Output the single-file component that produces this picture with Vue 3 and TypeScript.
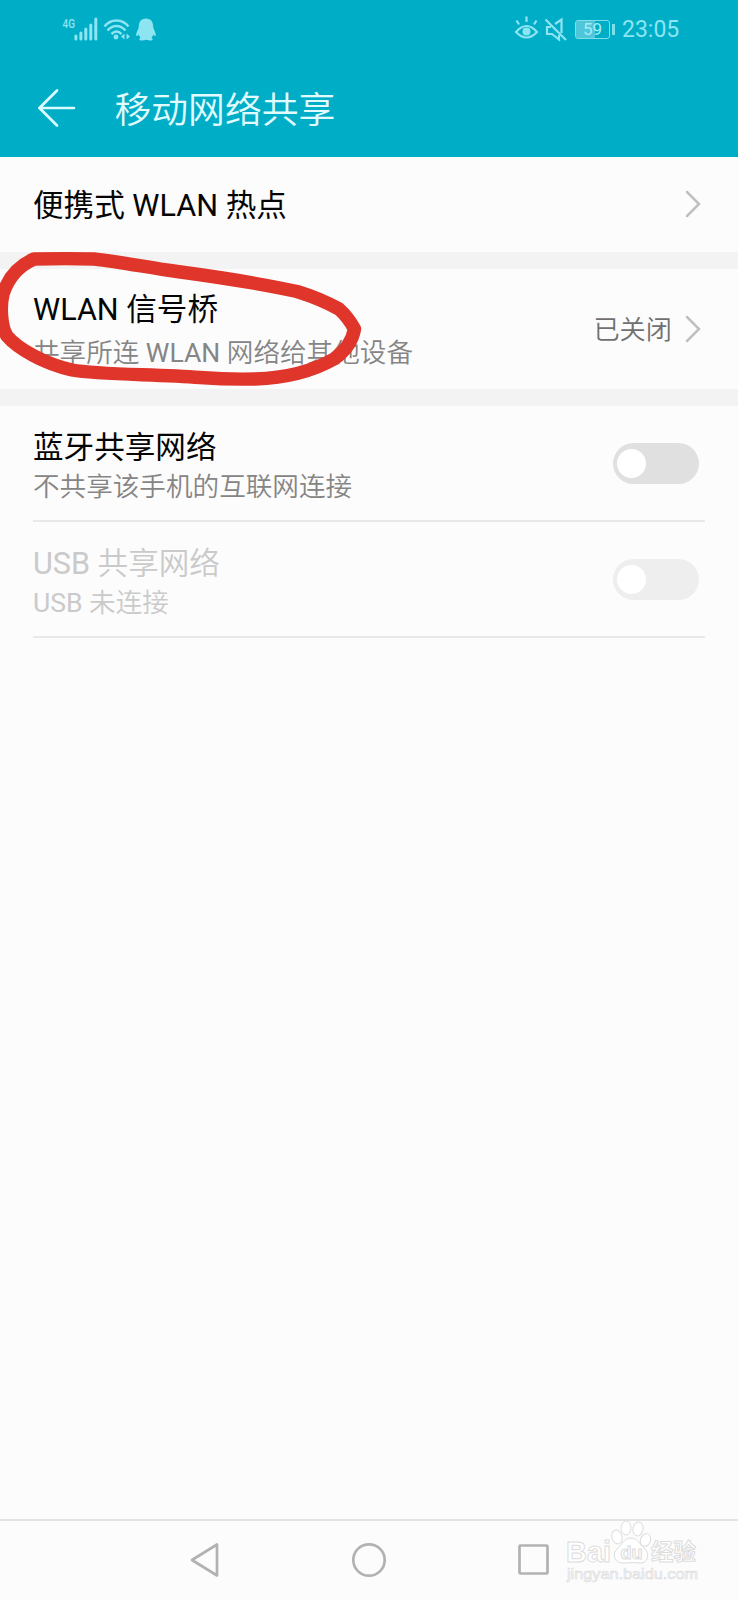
<script setup lang="ts">
interface SwitchRow {
  title: string
  latin: string
  summary: string
  disabled: boolean
}

const switchRows: SwitchRow[] = [
  { title: '蓝牙共享网络', latin: '', summary: '不共享该手机的互联网连接', disabled: false },
  { title: ' 共享网络', latin: 'USB', summary: ' 未连接', disabled: true },
]
</script>

<template>
  <div class="screen">
    <header class="header">
      <div class="status">
        <svg class="status-left" width="100" height="30" viewBox="0 0 100 30">
          <text class="net" x="0.500" y="12.500" textLength="12.500" lengthAdjust="spacingAndGlyphs">4G</text>
          <g class="bars">
            <path d="M13.9 24v-3M18.9 24v-6M23.8 24v-10M28.8 24v-14M33.8 24V4" />
          </g>
          <g class="arcs">
            <path d="M42.5 11.5C49 3.5 60 3.5 66.5 11.5M45.5 15.5C51 9.5 58 9.5 63.5 15.5M49.5 19C53 15.5 56 15.5 59.5 19" />
          </g>
          <circle class="solid" cx="54" cy="22" r="2.4" />
          <path class="solid" d="M62.5 18.500v6l-3.500-3zM64.5 18.500v6l3.500-3z" />
          <path class="solid" d="M84 3.500c-5 0-7.200 3.600-7.200 8 0 2.500-2.900 6-2.600 9 .3 1.200 1.300.5 2.400-1 .4 1.400 1.100 2.500 1.900 3.300-1 .7-1.500 1.600-.9 2.100 1.200.9 5.200.8 6.400-.3 1.200 1.100 5.200 1.200 6.400.3.6-.5.100-1.400-.9-2.100.8-.8 1.500-1.900 1.900-3.300 1.100 1.500 2.100 2.200 2.400 1 .3-3-2.600-6.500-2.600-9 0-4.400-2.200-8-7.200-8z" />
        </svg>
        <div class="status-right">
          <svg width="54" height="30" viewBox="0 0 54 30">
            <g class="thin">
              <path d="M2 17Q12.500 5 23 17Q12.500 28 2 17zM5 9.500l-2.500-4M20 9.500l2.500-4M12.500 7V1.500" />
              <path d="M37 12h-4v7h5l7 5.500V20M41 9l6.500-4.500V18M31.500 4.500l20.500 20.500" />
            </g>
            <circle class="solid" cx="12.500" cy="16.500" r="4" />
          </svg>
          <span class="battery"><span class="level">59</span></span>
          <span class="battery-tip"></span>
          <span class="clock">23:05</span>
        </div>
      </div>
      <div class="bar">
        <svg class="back" width="38" height="38" viewBox="0 0 38 38">
          <path d="M36 19H1.800M19 1.500L1.500 19L19 36.500" />
        </svg>
        <h1>移动网络共享</h1>
      </div>
    </header>

    <main class="list">
      <div class="row hotspot">
        <div class="title">便携式 WLAN 热点</div>
        <svg class="chevron" width="16" height="28" viewBox="0 0 16 28"><path d="M2 2l12 12L2 26" /></svg>
      </div>
      <div class="gap"></div>
      <div class="row bridge">
        <div class="texts">
          <div class="title">WLAN 信号桥</div>
          <div class="summary">共享所连 <span class="latin">WLAN</span> 网络给其他设备</div>
        </div>
        <div class="state">已关闭</div>
        <svg class="chevron" width="16" height="28" viewBox="0 0 16 28"><path d="M2 2l12 12L2 26" /></svg>
        <svg class="mark" width="370" height="140" viewBox="0 250 370 140">
          <path d="M34 259C55 258.500 76 258.500 94 259C122 262 150 268 177 271.500C218 277 258 283 297 291.500C315 297 328 303 339 309Q348 317 354.500 329C352 343 344 352 334 359C313 371 285 378 255 379C236 379.500 220 379 200 377.500C155 374 100 375 72 370C45 364 18 349 7 336C1 327 0 306 3 294C8 278 18 266 34 259Z" />
        </svg>
      </div>
      <div class="gap"></div>
      <div v-for="row in switchRows" :key="row.title" class="row toggle-row" :class="{ disabled: row.disabled }">
        <div class="texts">
          <div class="title"><span class="latin">{{ row.latin }}</span>{{ row.title }}</div>
          <div class="summary"><span class="latin">{{ row.latin }}</span>{{ row.summary }}</div>
        </div>
        <div class="switch"><div class="knob"></div></div>
      </div>
    </main>

    <footer class="nav">
      <svg width="30" height="36" viewBox="0 0 30 36"><path d="M27 2.500v31L2 18z" /></svg>
      <svg width="36" height="36" viewBox="0 0 36 36"><circle cx="18" cy="18" r="15.700" /></svg>
      <svg width="32" height="36" viewBox="0 0 32 36"><rect x="1.500" y="3.500" width="28" height="28" rx="1" /></svg>
      <svg class="watermark" width="140" height="70" viewBox="0 0 140 70">
        <text class="brand" x="0" y="40.500" textLength="45" lengthAdjust="spacingAndGlyphs">Bai</text>
        <g class="paw">
          <ellipse cx="51" cy="16" rx="5" ry="7" transform="rotate(-15 51 16)" />
          <ellipse cx="60" cy="7" rx="5" ry="7" />
          <ellipse cx="72" cy="8" rx="5" ry="7" transform="rotate(12 72 8)" />
          <ellipse cx="79.500" cy="19" rx="5" ry="6.500" transform="rotate(20 79.500 19)" />
          <path d="M65 17C58 17 56 24 51 28C46 32 48 42 57 42C62 42 68 41 73 42C82 43 84 33 79 28C73 23 72 17 65 17Z" />
        </g>
        <text class="du" x="54.500" y="38" textLength="22" lengthAdjust="spacingAndGlyphs">du</text>
        <text class="cn" x="85" y="39" textLength="45" lengthAdjust="spacingAndGlyphs">经验</text>
        <text class="site" x="1" y="58" textLength="131" lengthAdjust="spacingAndGlyphs">jingyan.baidu.com</text>
      </svg>
    </footer>
  </div>
</template>

<style>
body {
  margin: 0;
  background: #fcfcfc;
}
</style>

<style scoped>
.screen {
  width: 738px;
  height: 1600px;
  display: flex;
  flex-direction: column;
  overflow: hidden;
  background: #fcfcfc;
  font-family: Roboto, "Noto Sans CJK SC", sans-serif;
}
svg {
  display: block;
  flex: none;
}
.header {
  height: 157px;
  flex: none;
  background: #00adc7;
}
.status {
  height: 59px;
  padding: 0 58px 0 62px;
  display: flex;
  align-items: center;
  justify-content: space-between;
}
.status-right {
  display: flex;
  align-items: center;
}
.net {
  font: 500 13px Roboto, sans-serif;
  fill: #8ce5f1;
}
.bars path {
  stroke: #8ce5f1;
  stroke-width: 3;
  stroke-linecap: round;
  fill: none;
}
.arcs path {
  stroke: #8ce5f1;
  stroke-width: 2.500;
  fill: none;
}
.thin path {
  stroke: #8ce5f1;
  stroke-width: 2.200;
  fill: none;
}
.solid {
  fill: #8ce5f1;
}
.battery {
  box-sizing: border-box;
  width: 35px;
  height: 19px;
  margin-left: 7px;
  border: 1.500px solid #7edeea;
  border-radius: 3px;
  background: linear-gradient(90deg, #4fc6d9 58%, transparent 58%);
  text-align: center;
}
.level {
  display: block;
  font-size: 17px;
  line-height: 17px;
  color: #a5edf5;
}
.battery-tip {
  width: 3px;
  height: 11px;
  margin: 0 7px 0 2px;
  background: #7edeea;
}
.clock {
  width: 58px;
  font-size: 23px;
  line-height: 30px;
  color: #8ce5f1;
}
.bar {
  height: 98px;
  display: flex;
  align-items: center;
  padding-left: 38px;
}
.back path {
  fill: none;
  stroke: #d8fcff;
  stroke-width: 2.700;
  stroke-linecap: round;
}
h1 {
  margin: 6px 0 0 38.500px;
  font-size: 36.800px;
  line-height: 48px;
  font-weight: 350;
  color: #e0fcff;
}
.row {
  position: relative;
  box-sizing: border-box;
  padding: 0 37px 0 33px;
  display: flex;
  align-items: center;
  justify-content: space-between;
}
.hotspot {
  height: 95px;
}
.hotspot .title {
  margin-top: 2px;
}
.hotspot .chevron {
  margin-bottom: 2px;
}
.bridge {
  height: 120px;
}
.bridge .texts {
  padding-top: 1px;
}
.gap {
  height: 17px;
  background: #f3f3f3;
}
.title {
  font-size: 30.600px;
  line-height: 42px;
  color: #050505;
  white-space: nowrap;
}
.summary {
  font-size: 26.600px;
  line-height: 36px;
  color: #858585;
  font-weight: 350;
  white-space: nowrap;
}
.latin {
  font-weight: 400;
}
.bridge .summary {
  margin-top: 4px;
}
.texts {
  flex: 1;
}
.state {
  margin: 2px 13px 0 0;
  font-size: 26.200px;
  line-height: 36px;
  font-weight: 350;
  color: #707070;
}
.chevron path {
  fill: none;
  stroke: #c0c0c0;
  stroke-width: 2.500;
  stroke-linecap: round;
}
.mark {
  position: absolute;
  left: 0;
  top: -19px;
}
.mark path {
  fill: none;
  stroke: #df352b;
  stroke-width: 13.400;
  stroke-linejoin: round;
}
.toggle-row {
  height: 116px;
  margin: 0 33px;
  padding: 0 6px 0 0;
  border-bottom: 2px solid #e8e8e8;
}
.toggle-row .texts {
  padding-top: 5px;
}
.switch {
  box-sizing: border-box;
  width: 86px;
  height: 41px;
  padding: 6px 4px;
  border-radius: 21px;
  background: #e0e0e0;
}
.knob {
  width: 29px;
  height: 29px;
  border-radius: 50%;
  background: #fff;
}
.disabled .title,
.disabled .summary {
  color: #cacaca;
}
.disabled .title {
  font-weight: 350;
}
.disabled .switch {
  background: #eee;
}
.nav {
  position: relative;
  box-sizing: border-box;
  height: 81px;
  margin-top: auto;
  padding: 0 188px 2px 190px;
  border-top: 2px solid #e4e4e4;
  display: flex;
  align-items: center;
  justify-content: space-between;
}
.nav > svg:not(.watermark) {
  fill: none;
  stroke: #b2b2b2;
  stroke-width: 2.700;
  stroke-linejoin: round;
}
.watermark {
  position: absolute;
  left: 566px;
  top: 0;
  overflow: visible;
  fill: #fff;
  stroke: #dcdcdc;
  stroke-width: 1;
}
.brand {
  font: 700 30px "Liberation Sans", sans-serif;
}
.du {
  font: 700 18px "Liberation Sans", sans-serif;
}
.cn {
  font: 700 23px "Noto Sans CJK SC", sans-serif;
}
.site {
  font: 15.500px "Liberation Sans", sans-serif;
  stroke-width: 0.700;
}
</style>
